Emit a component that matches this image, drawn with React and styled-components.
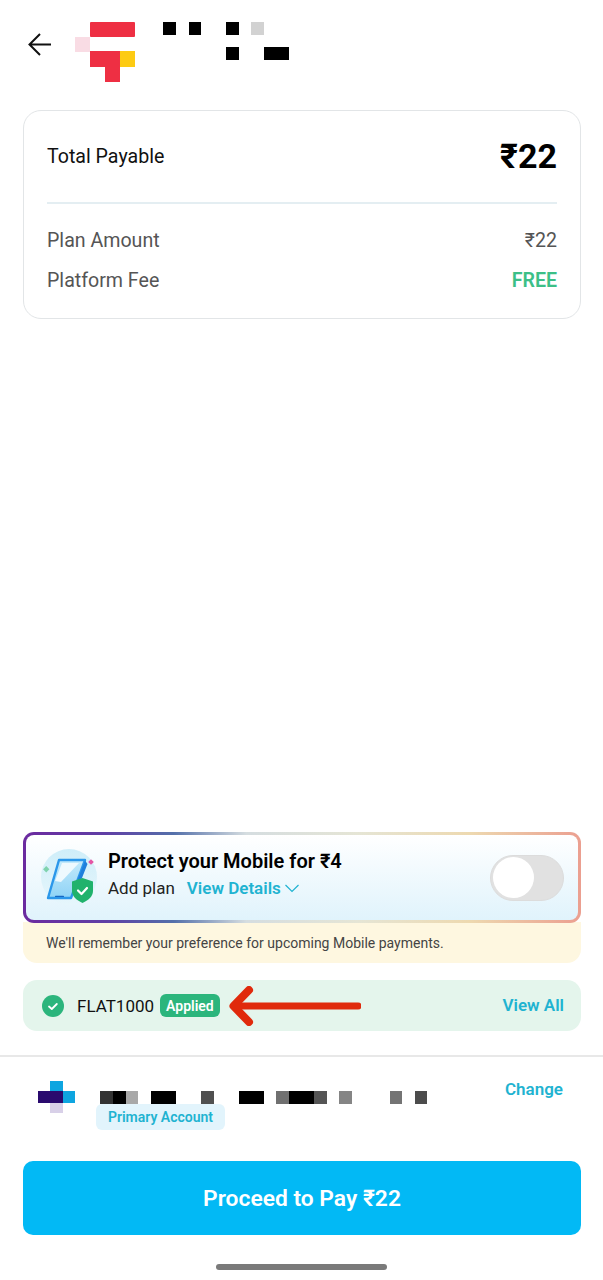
import React from 'react';
import styled, { createGlobalStyle } from 'styled-components';

const GlobalStyle = createGlobalStyle`
  html, body {
    margin: 0;
    padding: 0;
    background: #fff;
  }
  * {
    box-sizing: border-box;
  }
`;

const Page = styled.div`
  width: 603px;
  height: 1280px;
  display: flex;
  flex-direction: column;
  background: #fff;
  font-family: Roboto, Inter, "Noto Sans", sans-serif;
  overflow: hidden;
`;

const Header = styled.header`
  height: 110px;
  flex: none;
  display: flex;
  align-items: flex-start;
  padding: 22px 0 0 28px;
`;

const BackIcon = styled.svg`
  width: 24px;
  height: 24px;
  margin: 11px 23px 0 0;
  flex: none;
`;

const Logo = styled.svg`
  width: 60px;
  height: 60px;
  margin-right: 28px;
  flex: none;
`;

const Mosaic = styled.svg`
  display: block;
  flex: none;
`;

const SummaryCard = styled.section`
  margin: 0 22px 0 23px;
  height: 209px;
  flex: none;
  padding: 0 23px;
  border: 1px solid #e2e5e7;
  border-radius: 18px;
`;

const TotalRow = styled.div`
  height: 93px;
  display: flex;
  align-items: center;
  justify-content: space-between;
  border-bottom: 2px solid #e4eef2;
`;

const TotalLabel = styled.span`
  font-size: 19.6px;
  color: #111;
`;

const TotalValue = styled.span`
  font-size: 34px;
  font-weight: 700;
  color: #000;
  padding-bottom: 2px;
`;

const Rows = styled.div`
  padding-top: 16px;
`;

const Row = styled.div`
  height: 40px;
  display: flex;
  align-items: center;
  justify-content: space-between;
  font-size: 19.6px;
  color: #555;
`;

const Free = styled.span`
  font-weight: 600;
  color: #3cbf87;
`;

const Spacer = styled.div`
  flex: 1;
`;

const ProtectCard = styled.section`
  position: relative;
  z-index: 1;
  margin: 0 22px 0 23px;
  height: 91px;
  flex: none;
  display: flex;
  align-items: center;
  padding: 0 14px;
  border: 3px solid transparent;
  border-radius: 11px;
  background:
    linear-gradient(180deg, #fff 0%, #e0f3fc 100%) padding-box,
    linear-gradient(90deg, #6b2a9f 0%, #5f3fa5 15%, #5470aa 27%, #d5dde0 40%, #e5e5d5 60%, #edd9b0 80%, #eb9f90 100%) border-box;
`;

const ShieldIcon = styled.svg`
  width: 58px;
  height: 58px;
  flex: none;
  margin-right: 10px;
`;

const ProtectText = styled.div`
  display: flex;
  flex-direction: column;
  gap: 5px;
  padding-bottom: 6px;
`;

const ProtectTitle = styled.div`
  font-size: 20px;
  line-height: 22px;
  font-weight: 600;
  color: #000;
`;

const ProtectSub = styled.div`
  display: flex;
  align-items: center;
  font-size: 17px;
  line-height: 22px;
  color: #222;
`;

const LinkText = styled.span`
  font-size: 17px;
  font-weight: 600;
  color: #1fb3d1;
  margin-left: ${({ $gap }) => $gap || 0}px;
`;

const Chevron = styled.svg`
  width: 16px;
  height: 10px;
  margin-left: 3px;
`;

const Toggle = styled.div`
  width: 74px;
  height: 46px;
  margin-left: auto;
  flex: none;
  display: flex;
  align-items: center;
  padding-left: 2px;
  border-radius: 23px;
  background: #e1e1e1;
  border: 1px solid #dcdcdc;
`;

const Knob = styled.div`
  width: 41px;
  height: 41px;
  border-radius: 50%;
  background: #fff;
`;

const Note = styled.div`
  margin: -1px 22px 0 23px;
  height: 41px;
  flex: none;
  display: flex;
  align-items: center;
  padding: 0 23px;
  background: #fef7e0;
  border-radius: 0 0 14px 14px;
  font-size: 14px;
  color: #444;
`;

const CouponRow = styled.section`
  margin: 17px 22px 0 23px;
  height: 51px;
  flex: none;
  display: flex;
  align-items: center;
  padding: 0 17px 0 19px;
  background: #e4f5ec;
  border-radius: 14px;
`;

const CheckIcon = styled.svg`
  width: 22px;
  height: 22px;
  flex: none;
  margin-right: 13px;
`;

const CouponCode = styled.span`
  font-size: 17px;
  color: #111;
  margin-right: 6px;
`;

const AppliedBadge = styled.span`
  height: 23px;
  padding: 0 6px;
  display: flex;
  align-items: center;
  border-radius: 6px;
  background: #2bb57c;
  color: #fff;
  font-size: 14px;
  font-weight: 600;
`;

const ArrowIcon = styled.svg`
  width: 132px;
  height: 40px;
  flex: none;
  margin-left: 9px;
`;

const ViewAll = styled(LinkText)`
  margin-left: auto;
  padding-bottom: 2px;
`;

const AccountSection = styled.section`
  margin-top: 24px;
  height: 106px;
  flex: none;
  display: flex;
  align-items: flex-start;
  padding: 24px 40px 0 38px;
  border-top: 2px solid #e8e8e8;
`;

const BankLogo = styled.svg`
  width: 37px;
  height: 32px;
  flex: none;
  margin-right: 25px;
`;

const AccountInfo = styled.div`
  padding-top: 10px;
`;

const PrimaryBadge = styled.div`
  width: 129px;
  height: 26px;
  margin-left: -4px;
  display: flex;
  align-items: center;
  justify-content: center;
  border-radius: 6px;
  background: #e2f4fc;
  color: #1fb3d1;
  font-size: 14px;
  font-weight: 600;
`;

const ChangeLink = styled(LinkText)`
  margin: -1px 0 0 auto;
  line-height: 18px;
`;

const PayButton = styled.button`
  margin: 0 22px 0 23px;
  height: 74px;
  flex: none;
  border: 0;
  border-radius: 10px;
  background: #02b9f5;
  color: #fff;
  font-family: inherit;
  font-size: 22.8px;
  font-weight: 600;
`;

const HomeBar = styled.div`
  width: 171px;
  height: 6px;
  flex: none;
  margin: 29px auto 10px;
  border-radius: 3px;
  background: #7a7a7a;
`;

const titleCells = [
  [0, 0, 13, '#000'], [26, 0, 12, '#000'], [63, 0, 13, '#000'], [88, 0, 13, '#d2d2d2'],
  [63, 25, 13, '#000'], [101, 25, 25, '#000'],
];

const accountCells = [
  [0, 13, '#333'], [13, 13, '#000'], [26, 12, '#a8a8a8'], [51, 25, '#000'], [101, 13, '#505050'],
  [139, 25, '#000'], [176, 13, '#707070'], [189, 25, '#000'], [214, 13, '#555'], [239, 13, '#858585'],
  [290, 12, '#747474'], [315, 12, '#4c4c4c'],
];

const App = () => (
  <Page>
    <GlobalStyle />
    <Header>
      <BackIcon viewBox="0 0 24 24" fill="none" stroke="#111" strokeWidth="2">
        <path d="M23 11.500H1.500M12 1 1.500 11.500 12 22" />
      </BackIcon>
      <Logo viewBox="0 0 60 60">
        <rect x="15" y="0" width="45" height="15" rx="1" fill="#ee2f43" />
        <rect x="0" y="15" width="15" height="15" fill="#f9dce4" />
        <path d="M15 29h30v31H30V45H15z" fill="#ee2f43" />
        <rect x="45" y="29" width="15" height="16" fill="#fdcb13" />
      </Logo>
      <Mosaic width="126" height="38">
        {titleCells.map(([x, y, w, fill]) => (
          <rect key={`${x}-${y}`} x={x} y={y} width={w} height="13" fill={fill} />
        ))}
      </Mosaic>
    </Header>

    <SummaryCard>
      <TotalRow>
        <TotalLabel>Total Payable</TotalLabel>
        <TotalValue>₹22</TotalValue>
      </TotalRow>
      <Rows>
        <Row>
          <span>Plan Amount</span>
          <span>₹22</span>
        </Row>
        <Row>
          <span>Platform Fee</span>
          <Free>FREE</Free>
        </Row>
      </Rows>
    </SummaryCard>

    <Spacer />

    <ProtectCard>
      <ShieldIcon viewBox="0 0 58 58">
        <defs>
          <linearGradient id="iconHalo" x1="0" y1="0" x2="0" y2="1">
            <stop offset="0" stopColor="#cfeef9" />
            <stop offset="1" stopColor="#e6f6fc" />
          </linearGradient>
          <linearGradient id="phoneGlass" x1="0" y1="0" x2="0" y2="1">
            <stop offset="0" stopColor="#c4eafb" />
            <stop offset="1" stopColor="#8fd3f6" />
          </linearGradient>
        </defs>
        <circle cx="29" cy="28" r="28" fill="url(#iconHalo)" />
        <path d="M19 11h26L31 49H8z" fill="url(#phoneGlass)" stroke="#2b97ea" strokeWidth="2.400" strokeLinejoin="round" />
        <path d="M45 11.500 47.500 15 36 44l-3-1z" fill="#1f7fdc" />
        <path d="M22 14h17L21 33l-6-1z" fill="#eef9fe" />
        <rect x="15" y="46.700" width="9" height="1.300" rx=".6" fill="#1668c4" />
        <path d="M42.500 29l10.500 3.500V42c0 5-4 9-10.500 12C36 51 32 47 32 42v-9.500z" fill="#20b26c" />
        <path d="M38 41.500l3.500 3.500 5.500-6" fill="none" stroke="#fff" strokeWidth="2.200" strokeLinecap="round" strokeLinejoin="round" />
        <rect x="4" y="18" width="4.500" height="4.500" transform="rotate(45 6.250 20.250)" fill="#7fd3ae" />
        <rect x="49" y="11" width="4" height="4" transform="rotate(45 51 13)" fill="#e455a5" />
      </ShieldIcon>
      <ProtectText>
        <ProtectTitle>Protect your Mobile for ₹4</ProtectTitle>
        <ProtectSub>
          Add plan
          <LinkText $gap={12}>View Details</LinkText>
          <Chevron viewBox="0 0 16 10" fill="none" stroke="#1fb3d1" strokeWidth="1.200">
            <path d="M1.500 2l6.500 6.500L14.500 2" />
          </Chevron>
        </ProtectSub>
      </ProtectText>
      <Toggle>
        <Knob />
      </Toggle>
    </ProtectCard>
    <Note>We'll remember your preference for upcoming Mobile payments.</Note>

    <CouponRow>
      <CheckIcon viewBox="0 0 22 22">
        <circle cx="11" cy="11" r="11" fill="#2bb57c" />
        <path d="M7 11.500l2.800 2.500 5-5" fill="none" stroke="#fff" strokeWidth="1.800" strokeLinecap="round" strokeLinejoin="round" />
      </CheckIcon>
      <CouponCode>FLAT1000</CouponCode>
      <AppliedBadge>Applied</AppliedBadge>
      <ArrowIcon viewBox="0 0 132 40" fill="none" stroke="#e02a0c" strokeLinecap="round" strokeLinejoin="round">
        <path d="M5 20h124" strokeWidth="7" />
        <path d="M20 4 4.500 20 20 36" strokeWidth="8" />
      </ArrowIcon>
      <ViewAll>View All</ViewAll>
    </CouponRow>

    <AccountSection>
      <BankLogo viewBox="0 0 37 32">
        <rect x="12" y="0" width="13" height="10" fill="#0ea5e0" />
        <rect x="0" y="10" width="25" height="12" fill="#2a0a6e" />
        <rect x="25" y="10" width="12" height="12" fill="#0ea5e0" />
        <rect x="12" y="22" width="13" height="10" fill="#d8d0e8" />
      </BankLogo>
      <AccountInfo>
        <Mosaic width="327" height="13">
          {accountCells.map(([x, w, fill]) => (
            <rect key={x} x={x} y="0" width={w} height="13" fill={fill} />
          ))}
        </Mosaic>
        <PrimaryBadge>Primary Account</PrimaryBadge>
      </AccountInfo>
      <ChangeLink>Change</ChangeLink>
    </AccountSection>

    <PayButton>Proceed to Pay ₹22</PayButton>
    <HomeBar />
  </Page>
);

export default App;
